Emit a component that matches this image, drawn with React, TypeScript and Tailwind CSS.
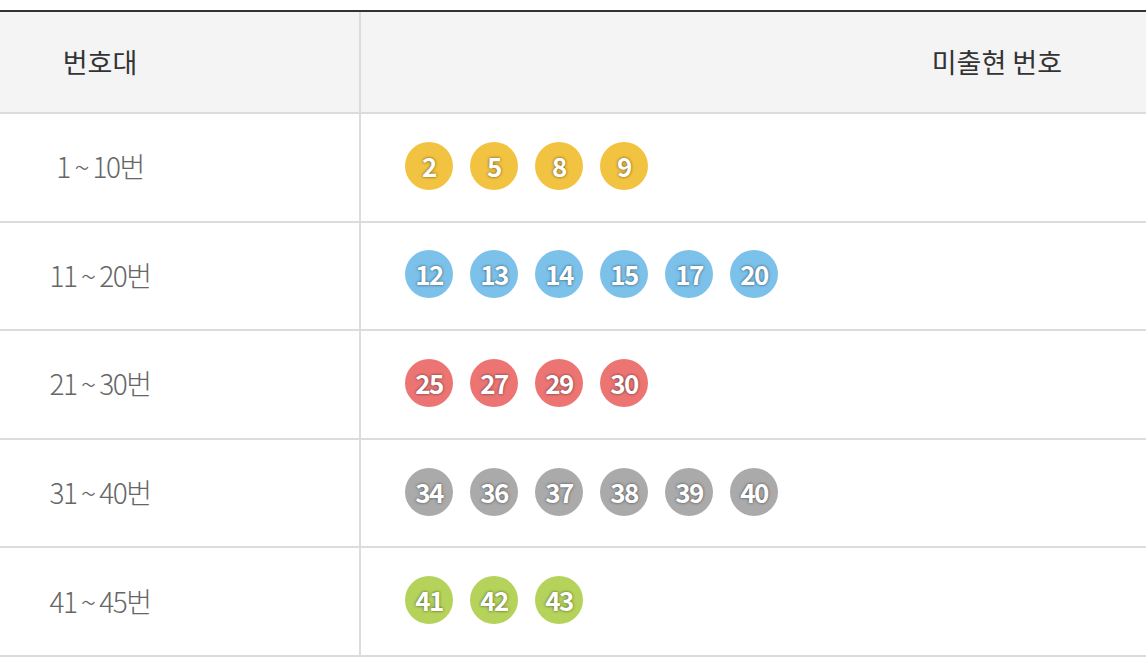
const ROWS: { label: string; color: string; nums: number[] }[] = [
    { label: '1 ~ 10번', color: 'bg-[#f2c340]', nums: [2, 5, 8, 9] },
    { label: '11 ~ 20번', color: 'bg-[#7cc1ea]', nums: [12, 13, 14, 15, 17, 20] },
    { label: '21 ~ 30번', color: 'bg-[#ec7574]', nums: [25, 27, 29, 30] },
    { label: '31 ~ 40번', color: 'bg-[#aaaaaa]', nums: [34, 36, 37, 38, 39, 40] },
    { label: '41 ~ 45번', color: 'bg-[#b5d35a]', nums: [41, 42, 43] },
];

const FONT = "font-['Noto_Sans_CJK_KR','Noto_Sans',sans-serif]";

function Ball({ n, color }: { n: number; color: string }) {
    return (
        <span
            className={`flex h-12 w-12 items-center justify-center rounded-full ${color} pb-[1px] text-[26px] font-bold tracking-[-1.5px] text-white [text-shadow:0_0_3px_rgba(0,0,0,0.6)]`}
        >
            {n}
        </span>
    );
}

export default function App() {
    return (
        <div className={`h-[660px] w-[1146px] bg-white pt-[10px] ${FONT}`}>
            <div className="border-t-2 border-[#333]">
                {/* header */}
                <div className="flex h-[102px] border-b-2 border-[#dcdcdc] bg-[#f4f4f4]">
                    <div className="flex w-[361px] shrink-0 border-r-2 border-[#dcdcdc]">
                        <span className="flex w-[200px] items-center justify-center text-[27px] text-[#333]">
                            번호대
                        </span>
                    </div>
                    <div className="flex flex-1 items-center justify-end pr-[84px] text-[27px] text-[#333]">
                        미출현 번호
                    </div>
                </div>
                {ROWS.map((row) => (
                    <div
                        key={row.label}
                        className="flex h-[108.6px] border-b-2 border-[#dcdcdc]"
                    >
                        <div className="flex w-[361px] shrink-0 border-r-2 border-[#dcdcdc]">
                            <span className="flex w-[200px] items-center justify-center pb-[2px] text-[28px] font-light tracking-[-1.5px] text-[#666]">
                                {row.label}
                            </span>
                        </div>
                        <div className="flex flex-1 items-center gap-[17px] pb-[3px] pl-[44px]">
                            {row.nums.map((n) => (
                                <Ball key={n} n={n} color={row.color} />
                            ))}
                        </div>
                    </div>
                ))}
            </div>
        </div>
    );
}
